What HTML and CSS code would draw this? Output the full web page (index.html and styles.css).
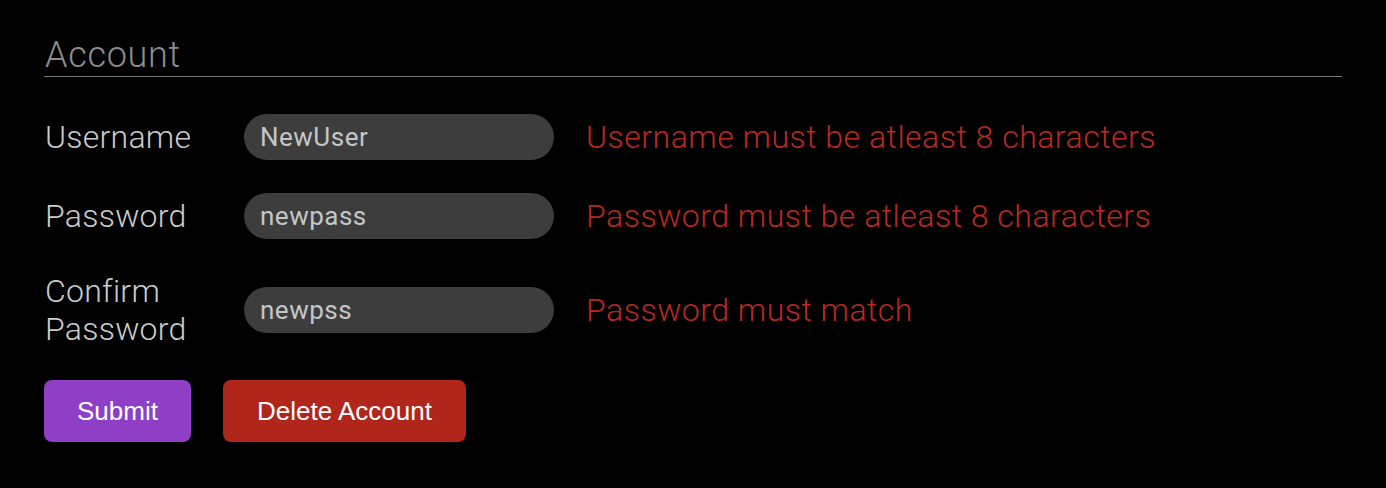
FILE: index.html
```html
<!DOCTYPE html>
<html>
<head>
<meta charset="utf-8">
<link rel="stylesheet" href="styles.css">
</head>
<body>
<div class="page">
  <h2 class="title">Account</h2>
  <form class="form">
    <div class="row">
      <label class="label">Username</label>
      <input class="input" type="text" value="NewUser">
      <span class="error">Username must be atleast 8 characters</span>
    </div>
    <div class="row">
      <label class="label">Password</label>
      <input class="input" type="text" value="newpass">
      <span class="error">Password must be atleast 8 characters</span>
    </div>
    <div class="row">
      <label class="label">Confirm Password</label>
      <input class="input" type="text" value="newpss">
      <span class="error">Password must match</span>
    </div>
    <div class="actions">
      <button type="button" class="btn btn-submit">Submit</button>
      <button type="button" class="btn btn-delete">Delete Account</button>
    </div>
  </form>
</div>
</body>
</html>
```

FILE: styles.css
```css
html, body {
  margin: 0;
  padding: 0;
  background: #000;
}
body {
  font-family: Roboto, "Liberation Sans", sans-serif;
}
.page {
  padding: 35px 44px 0 44px;
}
.title {
  margin: 0;
  font-size: 36px;
  font-weight: 300;
  letter-spacing: 0.7px;
  color: #8c8c8c;
  line-height: 40px;
  padding-left: 1px;
  padding-bottom: 1px;
  border-bottom: 1px solid #7a7a7a;
}
.form {
  display: flex;
  flex-direction: column;
  gap: 33px;
  margin-top: 37px;
}
.row {
  display: flex;
  align-items: center;
  gap: 32px;
}
.label {
  width: 167px;
  padding-left: 1px;
  font-size: 32px;
  font-weight: 300;
  letter-spacing: 0.25px;
  line-height: 38px;
  color: #c9cbcd;
}
.input {
  box-sizing: border-box;
  width: 310px;
  height: 46px;
  border: none;
  outline: none;
  border-radius: 23px;
  background: #3d3d3d;
  color: #c4c6c8;
  font-family: Roboto, sans-serif;
  font-size: 26px;
  letter-spacing: 0.5px;
  padding: 0 16px;
}
.error {
  font-size: 32px;
  font-weight: 300;
  letter-spacing: 0.5px;
  color: #b8291f;
}
.actions {
  display: flex;
  gap: 32px;
  margin-top: -1px;
}
.btn {
  height: 62px;
  border: none;
  border-radius: 8px;
  color: #fff;
  font-family: "Liberation Sans", Arial, sans-serif;
  font-size: 26px;
  padding: 0;
}
.btn-submit {
  width: 147px;
  background: #8e3fc6;
}
.btn-delete {
  width: 243px;
  background: #b0261b;
}
```
